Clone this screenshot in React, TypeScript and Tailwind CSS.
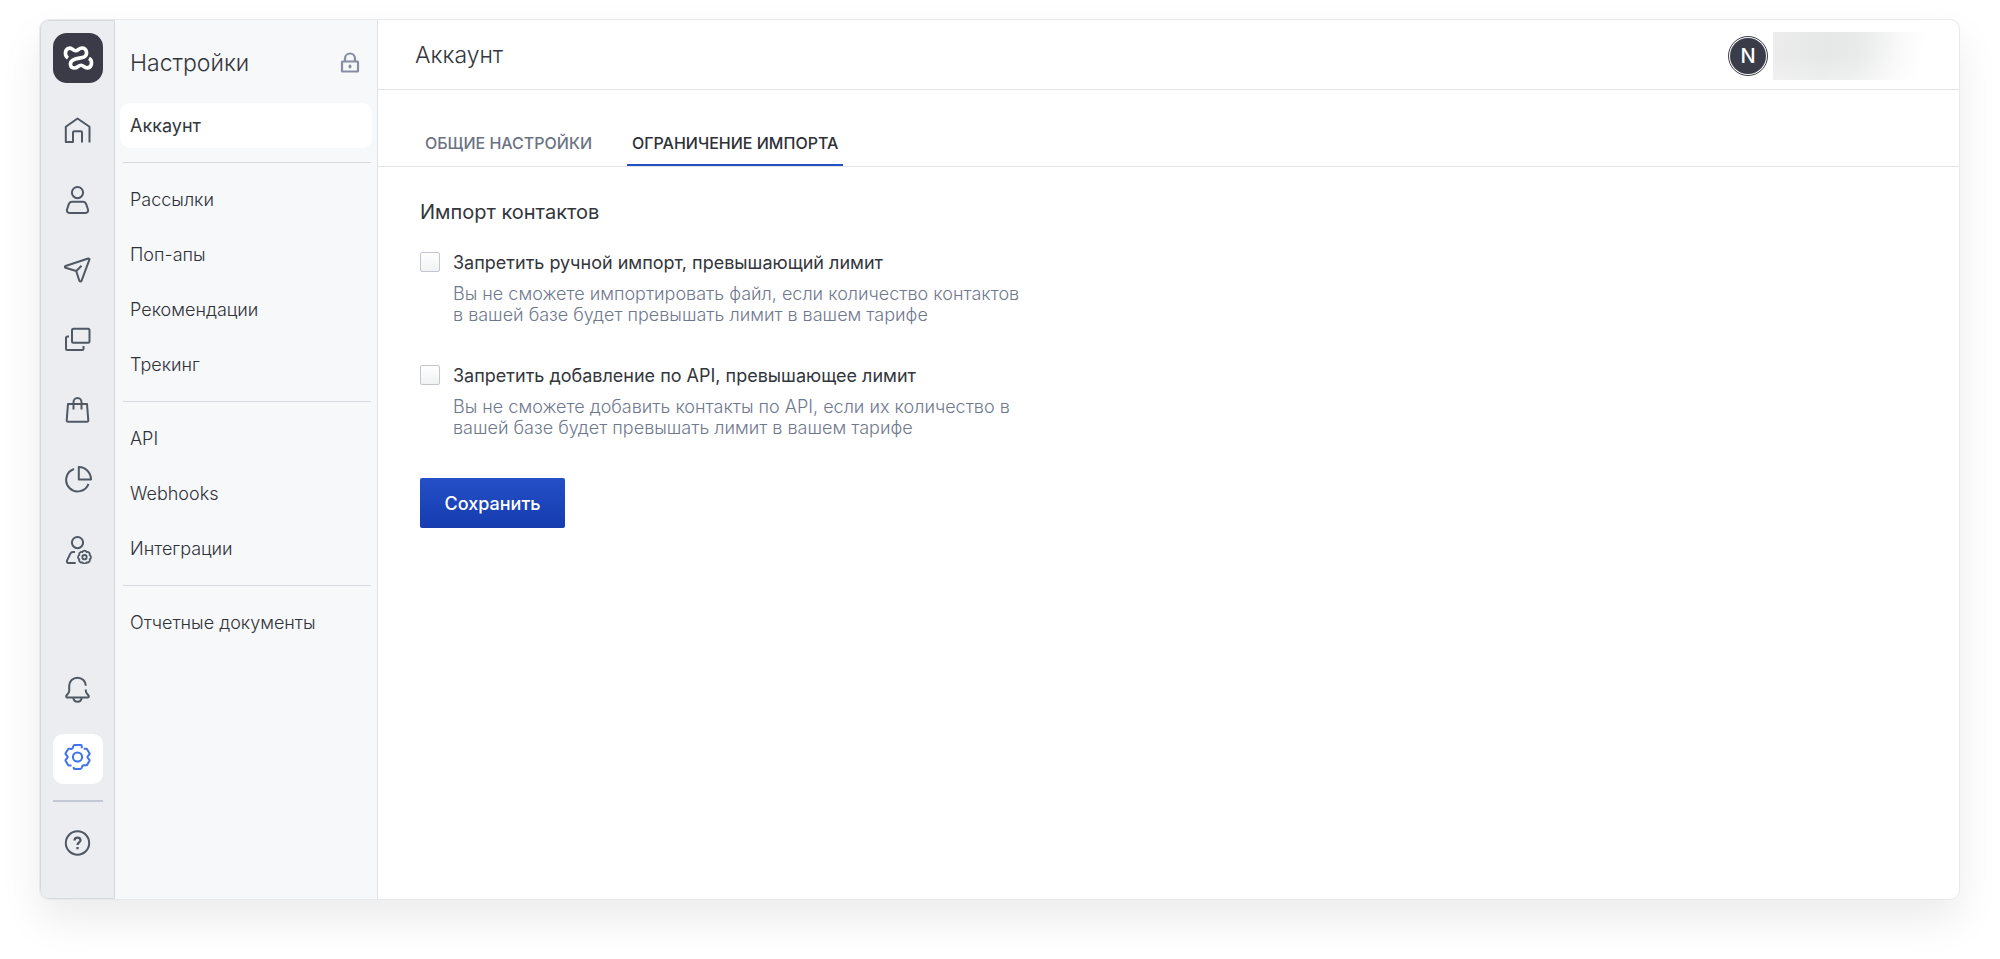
import React from "react";

type IconName = "home" | "user" | "send" | "windows" | "bag" | "pie" | "userCog" | "bell" | "gear" | "help";

const icons: Record<IconName, React.ReactNode> = {
  home: <path d="M9.500 26H2.300V10.800L14 2.500l12 8.300V26.500M9.500 26.800V16.500c0-.8.5-1.300 1.300-1.300h6.400c.8 0 1.300.5 1.300 1.300V26.500" />,
  user: (
    <>
      <circle cx="14" cy="6.600" r="5.600" />
      <path d="M8.600 15.800h10.800c1.300 0 2.500.7 3.100 1.900l2 5.800c.6 1.800-.6 3.500-2.500 3.500H6c-1.900 0-3.100-1.700-2.500-3.500l2-5.800c.6-1.200 1.800-1.900 3.100-1.900z" />
    </>
  ),
  send: (
    <path d="M18 9.800l-5.200 5.200M12.700 15L2 11.800c-.9-.3-.9-1.500 0-1.800L24.700 2.500c.8-.2 1.500.5 1.200 1.200L18 24.800c-.4 1-1.700 1-2.100.1z" />
  ),
  windows: (
    <>
      <rect x="8.500" y="2.800" width="17.500" height="14" rx="1.500" />
      <path d="M5.500 10.500h-1.500c-.8 0-1.500.7-1.500 1.500v10.500c0 .8.7 1.500 1.500 1.500h14.500c.8 0 1.500-.7 1.500-1.500v-2.500" />
    </>
  ),
  bag: <path d="M4.500 8h19l1.300 16.300c.1.800-.5 1.500-1.300 1.500h-19c-.8 0-1.400-.7-1.300-1.500zM10 13.500V6.300c0-2.300 1.800-4.300 4-4.300s4 2 4 4.300v7.200" />,
  pie: (
    <>
      <path d="M10.500 3A11.500 11.500 0 1 0 25 17.800" />
      <path d="M15.300 1v12.500h12.200c0-6.800-5.400-12.500-12.200-12.500z" />
    </>
  ),
  userCog: (
    <>
      <circle cx="14" cy="6.600" r="5.600" />
      <path d="M11.500 16H9.600c-1.200 0-2.300.7-2.900 1.900l-3.100 6.500c-.7 1.700.2 2.600 1.600 2.600h7" />
      <g transform="translate(21 21.200)" strokeWidth="1.800">
        <path d="M-2.140-5.170A2.400 2.400 0 0 1 2.140-5.170A2.400 2.400 0 0 1 5.170-2.140A2.400 2.400 0 0 1 5.170 2.140A2.400 2.400 0 0 1 2.140 5.170A2.400 2.400 0 0 1-2.140 5.170A2.400 2.400 0 0 1-5.170 2.140A2.400 2.400 0 0 1-5.170-2.140A2.400 2.400 0 0 1-2.140-5.170Z" />
        <circle r="2.200" />
      </g>
    </>
  ),
  bell: (
    <>
      <path d="M22.300 9.800C22.300 5.300 18.600 1.700 14 1.700S5.700 5.300 5.700 9.800v5c0 1-.3 1.900-1 2.600L3 19.500c-.7.700-.2 2 .8 2h20.400c1 0 1.500-1.300.8-2l-1.700-2.100c-.7-.7-1-1.600-1-2.600v-1.300" />
      <path d="M9.800 22c.4 2.300 2.100 3.800 4.200 3.800s3.800-1.500 4.200-3.800" />
    </>
  ),
  gear: (
    <>
      <circle cx="14" cy="14" r="4.600" />
      <path d="M18.300 5.200V3c0-.6-.4-1-1-1h-6c-.6 0-1 .3-1.300.9L9.200 5c-.3.600-1 1-1.700.9L5.600 5.800c-.6 0-1 .2-1.200.7L2.200 10c-.3.500-.2 1 .1 1.400l1.400 1.600c.5.600.5 1.400 0 2l-1.400 1.600c-.3.400-.4.900-.1 1.400l2.200 3.700c.3.500.7.700 1.200.7H8" />
      <path d="M20.300 5.700h2.200c.5 0 1 .2 1.200.7l2.200 3.700c.3.500.2 1-.1 1.400l-1.400 1.600c-.5.600-.5 1.400 0 2l1.400 1.600c.3.400.4.900.1 1.400l-2.200 3.500c-.3.500-.7.700-1.200.7l-2-.1c-.7 0-1.300.3-1.700.9l-.8 2c-.3.600-.7.900-1.300.9h-5.500c-.6 0-1-.4-1-1v-1" />
    </>
  ),
  help: (
    <>
      <circle cx="14" cy="14" r="11.700" />
      <path d="M11 11.500c0-1.800 1.300-2.900 3-2.900s3 1.100 3 2.700c0 2.100-3 2.300-3 4.700M14 18v2.200" strokeWidth="2.300" />
    </>
  ),
};

function Icon({ name }: { name: IconName }) {
  return (
    <svg viewBox="0.500 0 28 28" className="size-7" fill="none" stroke="currentColor" strokeWidth="2" strokeLinejoin="round" aria-hidden="true">
      {icons[name]}
    </svg>
  );
}

function RailLink({ name, label, active = false }: { name: IconName; label: string; active?: boolean }) {
  return (
    <a
      href="#"
      aria-label={label}
      className={
        active
          ? "flex size-[50px] items-start justify-center rounded-[10px] bg-white pt-[9px] text-[#3f72ec]"
          : "flex size-[50px] items-center justify-center text-[#4f5863]"
      }
    >
      <Icon name={name} />
    </a>
  );
}

function Rail() {
  return (
    <nav aria-label="Разделы" className="flex w-[75px] shrink-0 flex-col items-center rounded-l-[8px] border border-[#d6dae0] bg-[#ebedf1] pt-[12px] pb-[30px]">
      <a href="#" aria-label="Главная" className="flex size-[50px] items-center justify-center rounded-[14px] bg-[#3a3b47]">
        <svg viewBox="0 0 50 50" className="size-[50px]" fill="none" stroke="#fff" strokeWidth="3.600" aria-hidden="true">
          <path d="M15 25C11.500 23 11.300 16.500 16 15.200c3.300-.8 3.800 2.600 6.500 2.600s3.300-2.800 6.500-2.800c4.700 0 6.300 6.500 2.300 8.800C28.500 25.300 23 25 20 27c-4.300 2.800-2.800 8 1.500 8 3.200 0 3.800-2.800 6.500-2.800s3.300 3 6.500 2.700c4.800-.7 5.300-7.400 1.500-9.500" />
        </svg>
      </a>
      <div className="mt-[22px] flex flex-col gap-5">
        <RailLink name="home" label="Обзор" />
        <RailLink name="user" label="Контакты" />
        <RailLink name="send" label="Рассылки" />
        <RailLink name="windows" label="Поп-апы" />
        <RailLink name="bag" label="Товары" />
        <RailLink name="pie" label="Отчеты" />
        <RailLink name="userCog" label="Сегменты" />
      </div>
      <div className="mt-auto flex flex-col items-center">
        <RailLink name="bell" label="Уведомления" />
        <div className="mt-[19px]">
          <RailLink name="gear" label="Настройки" active />
        </div>
        <hr className="my-4 w-[50px] border-t-2 border-[#c3c9d3]" />
        <RailLink name="help" label="Помощь" />
      </div>
    </nav>
  );
}

const groups: string[][] = [
  ["Аккаунт"],
  ["Рассылки", "Поп-апы", "Рекомендации", "Трекинг"],
  ["API", "Webhooks", "Интеграции"],
  ["Отчетные документы"],
];

function SettingsMenu() {
  return (
    <aside className="w-[263px] shrink-0 border-r border-[#e0e3e8] bg-[#f7f8fa] px-[5px] pt-[23px]">
      <div className="flex h-10 items-center justify-between pr-3 pl-[10px]">
        <h2 className="text-[23px] font-light text-[#33363d]">Настройки</h2>
        <svg viewBox="0 0 20 22" className="h-[22px] w-5" fill="none" stroke="#868ea1" strokeWidth="2.200" aria-hidden="true">
          <rect x="2" y="9.500" width="16" height="10" rx=".5" />
          <path d="M5 9.500V6.500a5 5 0 0 1 10 0v3" />
          <ellipse cx="10" cy="14.500" rx="1.500" ry="2" fill="#868ea1" stroke="none" />
        </svg>
      </div>
      <nav aria-label="Настройки" className="mt-5">
        {groups.map((items, i) => (
          <React.Fragment key={items[0]}>
            {i > 0 && <hr className="my-[14px] mr-px ml-[3px] border-[#d6dae0]" />}
            <ul className="flex flex-col gap-[10px]">
              {items.map((item) => (
                <li key={item}>
                  <a
                    href="#"
                    className={
                      item === "Аккаунт"
                        ? "flex h-[45px] items-center rounded-[10px] bg-white px-[10px] text-[18px] text-[#33363d]"
                        : "flex h-[45px] items-center rounded-[10px] px-[10px] text-[18px] font-light text-[#2f3238]"
                    }
                  >
                    {item}
                  </a>
                </li>
              ))}
            </ul>
          </React.Fragment>
        ))}
      </nav>
    </aside>
  );
}

function Option({ id, label, children }: { id: string; label: string; children: React.ReactNode }) {
  return (
    <div className="flex items-start gap-[13px]">
      <input
        id={id}
        type="checkbox"
        aria-describedby={`${id}-hint`}
        className="size-5 shrink-0 appearance-none rounded-[2px] border border-[#c3c6d0] bg-linear-to-b from-white to-[#f1f2f3] checked:bg-[#1f49c0]"
      />
      <div>
        <label htmlFor={id} className="block text-[18px] leading-[21px] text-[#33363c]">
          {label}
        </label>
        <p id={`${id}-hint`} className="mt-[10px] text-[18px] leading-[21px] font-light text-[#6f798e]">
          {children}
        </p>
      </div>
    </div>
  );
}

export default function App() {
  return (
    <div className="flex min-h-screen bg-white pt-[19px] pr-[40px] pb-[59px] pl-[39px] font-['Inter','Liberation_Sans',sans-serif]">
      <div className="flex flex-1 overflow-clip rounded-[10px] border border-[#e8e9eb] bg-white shadow-[0_20px_40px_rgba(0,0,0,0.08)]">
        <Rail />
        <SettingsMenu />
        <main className="min-w-0 flex-1">
          <header className="flex h-[70px] items-center justify-between border-b border-[#e3e4e8] pt-[2px] pr-[33px] pl-[37px]">
            <h1 className="text-[23px] font-light text-[#33363d]">Аккаунт</h1>
            <div className="flex items-center gap-[5px]">
              <button type="button" aria-label="Профиль" className="flex size-10 items-center justify-center rounded-full border border-[#3a3b47] bg-white">
                <span className="flex size-9 items-center justify-center rounded-full bg-[#3a3d47] text-[20px] font-medium text-white">N</span>
              </button>
              <div className="h-12 w-[153px] bg-[linear-gradient(to_bottom,transparent_50%,rgba(255,255,255,0.3)),linear-gradient(100deg,#ececec_0%,#e6e7e7_35%,#e9eaea_55%,#f8f8f8_78%,#fff_95%)]" />
            </div>
          </header>
          <nav aria-label="Вкладки" className="flex items-end gap-[30px] border-b border-[#e3e4e8] pt-[32px] pl-[42px]">
            <a href="#" className="flex h-[44px] items-center border-b-2 border-transparent px-[5px] text-[16px] font-medium text-[#6b7383]">
              ОБЩИЕ НАСТРОЙКИ
            </a>
            <a href="#" aria-current="page" className="flex h-[44px] items-center border-b-2 border-[#2450c4] px-[5px] text-[16px] font-medium text-[#2d3036]">
              ОГРАНИЧЕНИЕ ИМПОРТА
            </a>
          </nav>
          <form className="px-[42px] pt-[31px]" onSubmit={(e) => e.preventDefault()}>
            <h2 className="text-[20px] leading-[28px] text-[#33363c]">Импорт контактов</h2>
            <div className="mt-[26px] flex flex-col gap-10">
              <Option id="manual" label="Запретить ручной импорт, превышающий лимит">
                Вы не сможете импортировать файл, если количество контактов
                <br />в вашей базе будет превышать лимит в вашем тарифе
              </Option>
              <Option id="api" label="Запретить добавление по API, превышающее лимит">
                Вы не сможете добавить контакты по API, если их количество в
                <br />
                вашей базе будет превышать лимит в вашем тарифе
              </Option>
            </div>
            <button type="submit" className="mt-10 h-[50px] w-[145px] rounded-[2px] bg-linear-to-b from-[#244fc6] to-[#163cb0] text-[18px] font-medium text-white">
              Сохранить
            </button>
          </form>
        </main>
      </div>
    </div>
  );
}
